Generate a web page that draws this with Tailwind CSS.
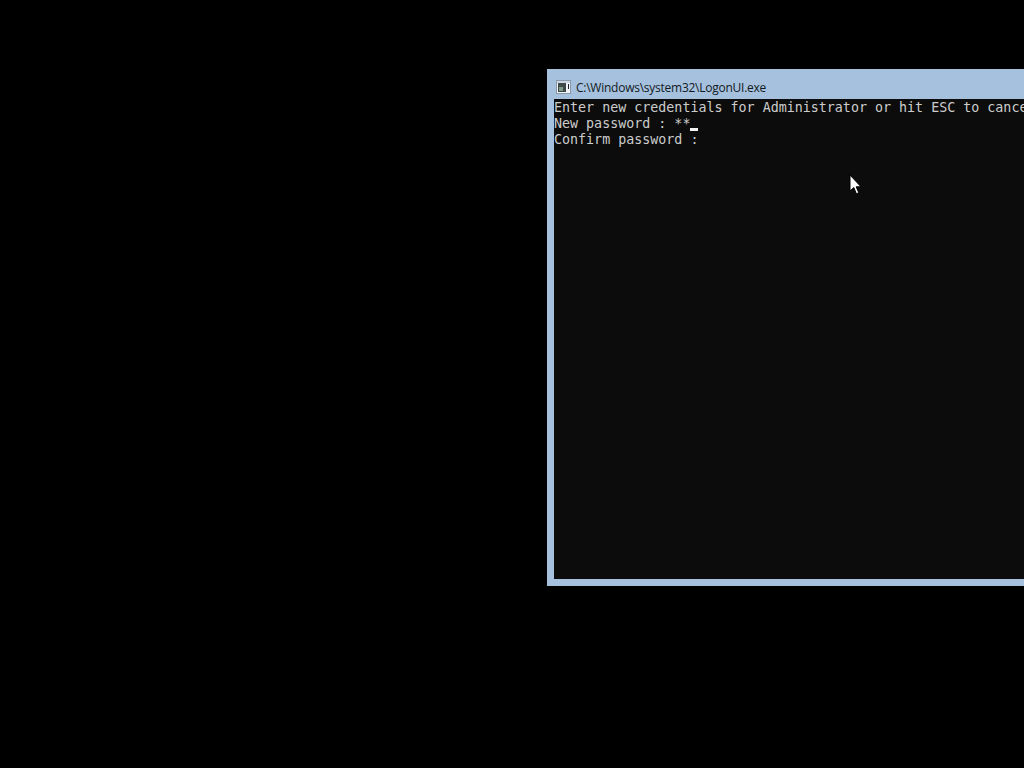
<!DOCTYPE html>
<html>
<head>
<meta charset="utf-8">
<script src="https://cdn.jsdelivr.net/npm/@tailwindcss/browser@4"></script>
<title>LogonUI</title>
</head>
<body class="bg-black">
<div class="relative w-[1024px] h-[768px] overflow-hidden bg-black">
  <div class="absolute left-[547px] top-[69px] w-[500px] h-[517px] bg-[#a6c1de] flex flex-col pl-[7px] pb-[7px]">
    <div class="h-[30px] shrink-0 flex items-center gap-[5px] pl-[2px] pt-[6px]">
      <svg class="w-[15px] h-[14px] shrink-0" viewBox="0 0 15 14">
        <rect x="0.5" y="0.5" width="14" height="13" fill="#eef3f8" stroke="#8a9aa8"/>
        <rect x="1" y="1" width="13" height="2" fill="#c9d6e4"/>
        <rect x="2" y="3" width="8" height="9" fill="#3f4a48"/>
        <rect x="3" y="7" width="4" height="4" fill="#7d9a88"/>
        <rect x="12" y="4" width="1" height="5" fill="#20262c"/>
      </svg>
      <span class="font-['Open_Sans','Noto_Sans',sans-serif] text-[12px] leading-[15px] text-[#111a22] whitespace-nowrap tracking-[-0.25px]">C:\Windows\system32\LogonUI.exe</span>
    </div>
    <div class="flex-1 bg-[#0c0c0c] pt-[1px] font-['DejaVu_Sans_Mono','Liberation_Mono',monospace] text-[13.33px] leading-[16px] text-[#cccccc] overflow-hidden">
      <div class="h-[16px] whitespace-pre">Enter new credentials for Administrator or hit ESC to cancel</div>
      <div class="h-[16px] relative whitespace-pre">New password : **<span class="absolute left-[136px] top-[12px] w-[8px] h-[3px] bg-[#f2f2f2]"></span></div>
      <div class="h-[16px] whitespace-pre">Confirm password :</div>
    </div>
  </div>
  <svg class="absolute left-[848px] top-[174px] w-[14px] h-[21px]" viewBox="0 0 14 21">
    <path d="M2 1 V17 L5.8 13.6 L8.4 19.8 L10.8 18.8 L8.2 12.8 H13 Z" fill="#ffffff" stroke="#000000" stroke-width="1"/>
  </svg>
</div>
</body>
</html>
